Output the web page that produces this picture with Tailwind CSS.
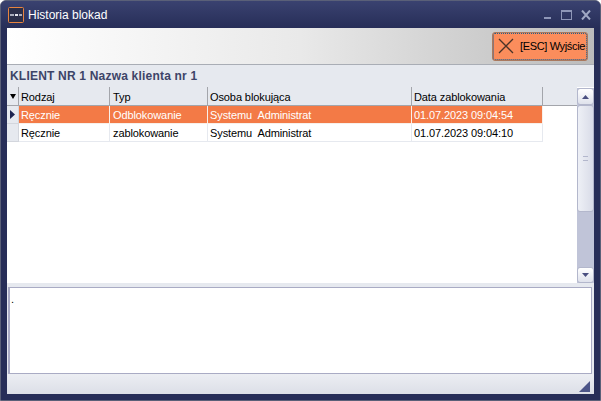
<!DOCTYPE html>
<html>
<head>
<meta charset="utf-8">
<title>Historia blokad</title>
<script src="https://cdn.jsdelivr.net/npm/@tailwindcss/browser@4"></script>
</head>
<body class="bg-white">
<div class="w-[601px] h-[401px] flex flex-col overflow-hidden rounded-t-[6px] border border-[#5a6078] bg-[#272e58] font-['Liberation_Sans',sans-serif] text-[11px] tracking-[-0.1px] text-black">
  <!-- title bar -->
  <div class="h-[27px] shrink-0 flex items-center pl-[7px] pr-[9px] bg-gradient-to-b from-[#3a4270] to-[#272e58]">
    <svg class="w-[16px] h-[16px] shrink-0" viewBox="0 0 16 16">
      <rect x="0.5" y="0.5" width="15" height="15" rx="1" fill="#2b2f4a" stroke="#e8843f"/>
      <rect x="2" y="7" width="4" height="2" fill="#a9adbd"/>
      <rect x="7" y="7" width="3" height="2" fill="#e4e6ee"/>
      <rect x="11" y="7" width="3" height="2" fill="#a9adbd"/>
    </svg>
    <span class="ml-[4px] text-[12px] text-white tracking-[0px]">Historia blokad</span>
    <div class="ml-auto flex items-center gap-[9px]">
      <svg class="w-[8px] h-[10px]" viewBox="0 0 8 10"><rect x="0" y="7" width="7" height="2" fill="#8e96b8"/></svg>
      <svg class="w-[11px] h-[10px]" viewBox="0 0 11 10"><rect x="0.5" y="0.5" width="10" height="9" fill="none" stroke="#8e96b8"/><rect x="0" y="0" width="11" height="2" fill="#8e96b8"/></svg>
      <svg class="w-[10px] h-[10px]" viewBox="0 0 10 10"><path d="M1 0.5 L9 9.5 M9 0.5 L1 9.5" stroke="#a0a8c4" stroke-width="2" fill="none"/></svg>
    </div>
  </div>
  <!-- client -->
  <div class="mx-[6px] w-[587px] h-[366px] flex flex-col bg-[#e6e9ef]">
    <!-- toolbar -->
    <div class="h-[37px] shrink-0 flex items-center justify-end pr-[6px] border-b border-[#a9adb5] bg-gradient-to-r from-white via-[#e9e9e9] to-[#bcbcbc]">
      <div class="w-[96px] h-[29px] flex items-center rounded-[3px] border border-[#a9795f] bg-[#fb8d5c] outline-1 outline-dotted outline-offset-[-2px] outline-[#1f5f8f] overflow-hidden">
        <svg class="ml-[5px] w-[16px] h-[16px] shrink-0" viewBox="0 0 16 16"><path d="M1 1 L15 15 M15 1 L1 15" stroke="#4a3428" stroke-width="1.3" fill="none"/></svg>
        <span class="ml-[6px] whitespace-nowrap tracking-[-0.35px]">[ESC] Wyjście</span>
      </div>
    </div>
    <!-- client name -->
    <div class="h-[22px] shrink-0 flex items-center pl-[3px] text-[12px] font-bold text-[#3d4468] tracking-[0.2px]">KLIENT NR 1 Nazwa klienta nr 1</div>
    <!-- grid and scrollbar -->
    <div class="h-[196px] shrink-0 flex bg-white">
      <div class="flex-1 flex flex-col">
        <div class="h-[19px] flex bg-[#e6e9ef] border-b border-[#a3a5ab]">
          <div class="w-[12px] flex items-center justify-center border-r border-[#a3a5ab]"><svg class="w-[6px] h-[5px]" viewBox="0 0 6 5"><path d="M0 0 H6 L3 5 Z" fill="#000"/></svg></div>
          <div class="w-[91px] flex items-center pl-[2px] pt-[2px] border-r border-[#a3a5ab]">Rodzaj</div>
          <div class="w-[98px] flex items-center pl-[3px] pt-[2px] border-r border-[#a3a5ab]">Typ</div>
          <div class="w-[204px] flex items-center pl-[2px] pt-[2px] border-r border-[#a3a5ab]">Osoba blokująca</div>
          <div class="w-[131px] flex items-center pl-[2px] pt-[2px] border-r border-[#a3a5ab]">Data zablokowania</div>
        </div>
        <div class="h-[18px] flex">
          <div class="w-[12px] flex items-center justify-center bg-[#e6e9ef] border-r border-b border-[#d3d6dd]"><svg class="w-[5px] h-[9px]" viewBox="0 0 5 9"><path d="M0 0 L5 4.5 L0 9 Z" fill="#1c2450"/></svg></div>
          <div class="w-[91px] flex items-center pl-[2px] pt-[1px] text-white bg-[#f37a46] border-r border-b border-[#f8f0ea]">Ręcznie</div>
          <div class="w-[98px] flex items-center pl-[3px] pt-[1px] text-white bg-[#f37a46] border-r border-b border-[#f8f0ea]">Odblokowanie</div>
          <div class="w-[204px] flex items-center pl-[2px] pt-[1px] text-white bg-[#f37a46] border-r border-b border-[#f8f0ea] whitespace-pre">Systemu  Administrat</div>
          <div class="w-[131px] flex items-center pl-[2px] pt-[1px] text-white bg-[#f37a46] border-r border-b border-[#f8f0ea]">01.07.2023 09:04:54</div>
        </div>
        <div class="h-[18px] flex">
          <div class="w-[12px] bg-[#e6e9ef] border-r border-b border-[#d3d6dd]"></div>
          <div class="w-[91px] flex items-center pl-[2px] pt-[1px] border-r border-b border-[#e6e9ef]">Ręcznie</div>
          <div class="w-[98px] flex items-center pl-[3px] pt-[1px] border-r border-b border-[#e6e9ef]">zablokowanie</div>
          <div class="w-[204px] flex items-center pl-[2px] pt-[1px] border-r border-b border-[#e6e9ef] whitespace-pre">Systemu  Administrat</div>
          <div class="w-[131px] flex items-center pl-[2px] pt-[1px] border-r border-b border-[#e6e9ef]">01.07.2023 09:04:10</div>
        </div>
      </div>
      <!-- scrollbar -->
      <div class="w-[17px] shrink-0 mt-[1px] flex flex-col bg-[#c0c4d8]">
        <div class="h-[17px] shrink-0 flex items-center justify-center rounded-[3px] border border-[#b3b7cc] bg-gradient-to-b from-white to-[#dfe2ec]"><svg class="w-[7px] h-[4px]" viewBox="0 0 7 4"><path d="M3.5 0 L7 4 H0 Z" fill="#4a4f80"/></svg></div>
        <div class="h-[107px] shrink-0 flex items-center justify-center rounded-[3px] border border-[#b3b7cc] bg-gradient-to-r from-[#eef0f6] to-[#d9dce8]"><div class="w-[5px] h-[5px] border-y border-[#b3b7cc]"></div></div>
        <div class="flex-1"></div>
        <div class="h-[16px] shrink-0 flex items-center justify-center rounded-[3px] border border-[#b3b7cc] bg-gradient-to-b from-white to-[#dfe2ec]"><svg class="w-[7px] h-[4px]" viewBox="0 0 7 4"><path d="M0 0 H7 L3.5 4 Z" fill="#4a4f80"/></svg></div>
      </div>
    </div>
    <!-- memo -->
    <div class="mt-[4px] h-[87px] shrink-0 ml-[1px] mr-[2px] bg-white border border-[#a9abc4] border-l-2 pl-[1px] pt-[3px]">.</div>
    <!-- status -->
    <div class="flex-1 flex items-end justify-end pr-[4px] pb-[2px] bg-gradient-to-b from-[#eceef3] to-[#dcdfe7]">
      <svg class="w-[11px] h-[11px]" viewBox="0 0 11 11"><path d="M11 0 V11 H0 Z" fill="#4c5588"/></svg>
    </div>
  </div>
</div>
</body>
</html>
